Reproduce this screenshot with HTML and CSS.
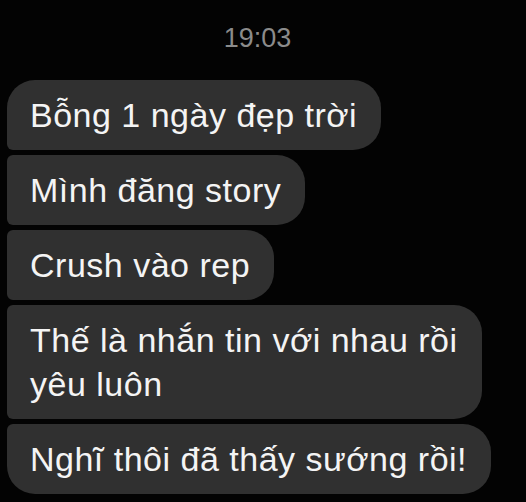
FILE: index.html
```html
<!DOCTYPE html>
<html lang="vi">
<head>
<meta charset="utf-8">
<title>Chat</title>
<link rel="stylesheet" href="styles.css">
</head>
<body>
<div class="chat">
  <div class="time">19:03</div>
  <div class="group">
    <div class="bubble first">Bỗng 1 ngày đẹp trời</div>
    <div class="bubble">Mình đăng story</div>
    <div class="bubble">Crush vào rep</div>
    <div class="bubble wide">Thế là nhắn tin với nhau rồi<br>yêu luôn</div>
    <div class="bubble last">Nghĩ thôi đã thấy sướng rồi!</div>
  </div>
</div>
</body>
</html>
```
FILE: styles.css
```css
html, body {
  margin: 0;
  padding: 0;
  background: #030303;
}
body {
  width: 526px;
  height: 502px;
  overflow: hidden;
  font-family: "Liberation Sans", Arial, sans-serif;
}
.chat {
  padding-top: 23px;
}
.time {
  color: #8b8b8b;
  font-size: 27px;
  line-height: 30px;
  text-align: center;
  padding-right: 11px;
  margin-bottom: 27px;
}
.group {
  display: flex;
  flex-direction: column;
  align-items: flex-start;
  gap: 5px;
  padding-left: 7px;
}
.bubble {
  background: #303030;
  color: #f4f4f4;
  font-size: 34px;
  line-height: 44px;
  letter-spacing: 0.5px;
  padding: 13px 24px 13px 23px;
  border-radius: 6px 28px 28px 6px;
  white-space: nowrap;
}
.bubble.first {
  border-top-left-radius: 28px;
}
.bubble.last {
  border-bottom-left-radius: 28px;
}
```
